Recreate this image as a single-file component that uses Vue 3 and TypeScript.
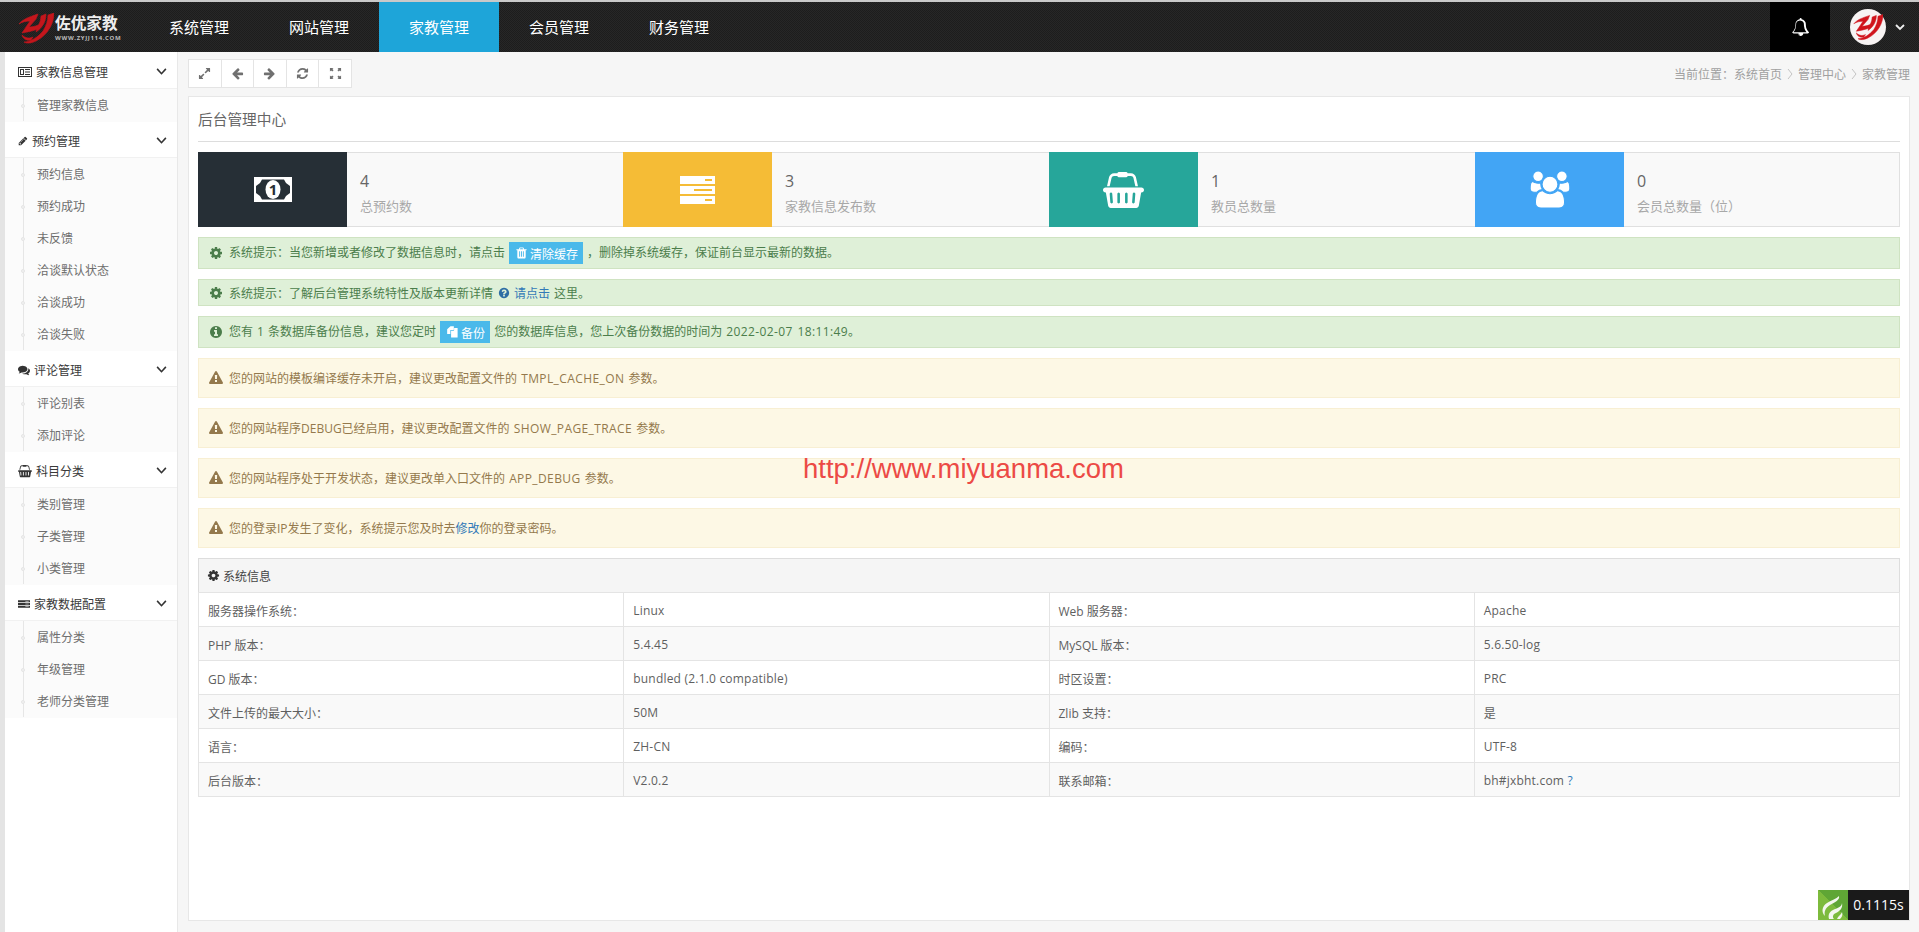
<script setup lang="ts">
const nav = ['系统管理', '网站管理', '家教管理', '会员管理', '财务管理']

const P = {
  gear: 'M1152 896q0-106-75-181t-181-75-181 75-75 181 75 181 181 75 181-75 75-181zm512-109v222q0 12-8 23t-20 13l-185 28q-19 54-39 91 35 50 107 138 10 12 10 25t-9 23q-27 37-99 108t-94 71q-12 0-26-9l-138-108q-44 23-91 38-16 136-29 186-7 28-36 28h-222q-14 0-24.500-8.500t-11.500-21.500l-28-184q-49-16-90-37l-141 107q-10 9-25 9-14 0-25-11-126-114-165-168-7-10-7-23 0-12 8-23 15-21 51-66.500t54-70.500q-27-50-41-99l-183-27q-13-2-21-12.500t-8-23.500v-222q0-12 8-23t19-13l186-28q14-46 39-92-40-57-107-138-10-12-10-24 0-10 9-23 26-36 98.500-107.500t94.500-71.500q13 0 26 10l138 107q44-23 91-38 16-136 29-186 7-28 36-28h222q14 0 24.500 8.500t11.500 21.500l28 184q49 16 90 37l142-107q9-9 24-9 13 0 25 10 129 119 165 170 7 8 7 22 0 12-8 23-15 21-51 66.500t-54 70.500q26 50 41 98l183 28q13 2 21 12.500t8 23.500z',
  users: 'M593 896q-162 5-265 128h-134q-82 0-138-40.500t-56-118.500q0-353 124-353 6 0 43.500 21t97.500 42.500 119 21.500q67 0 133-23-5 37-5 66 0 139 81 256zm1071 637q0 120-73 189.500t-194 69.500h-874q-121 0-194-69.500t-73-189.500q0-53 3.500-103.500t14-109 26.500-108.500 43-97.500 62-81 85.500-53.500 111.500-20q10 0 43 21.500t73 48 107 48 135 21.500 135-21.500 107-48 73-48 43-21.500q61 0 111.500 20t85.500 53.500 62 81 43 97.500 26.500 108.500 14 109 3.500 103.500zm-1024-1277q0 106-75 181t-181 75-181-75-75-181 75-181 181-75 181 75 75 181zm704 384q0 159-112.500 271.500t-271.500 112.500-271.500-112.500-112.500-271.500 112.500-271.500 271.500-112.500 271.500 112.500 112.500 271.500zm576 225q0 78-56 118.500t-138 40.500h-134q-103-123-265-128 81-117 81-256 0-29-5-66 66 23 133 23 59 0 119-21.500t97.500-42.500 43.500-21q124 0 124 353zm-128-609q0 106-75 181t-181 75-181-75-75-181 75-181 181-75 181 75 75 181z',
  bell: 'M912 1696q0-16-16-16-59 0-101.500-42.500t-42.500-101.500q0-16-16-16t-16 16q0 73 51.500 124.500t124.500 51.500q16 0 16-16zm-666-288h1300q-266-300-266-832 0-51-24-105t-69-103-121.500-80.500-169.500-31.500-169.500 31.500-121.500 80.500-69 103-24 105q0 532-266 832zm1546 0q0 52-38 90t-90 38h-448q0 106-75 181t-181 75-181-75-75-181h-448q-52 0-90-38t-38-90q50-42 91-88t85-119.500 74.500-158.500 50-206 19.500-260q0-152 117-282.500t307-158.500q-8-19-8-39 0-40 28-68t68-28 68 28 28 68q0 20-8 39 190 28 307 158.500t117 282.500q0 139 19.500 260t50 206 74.500 158.500 85 119.500 91 88z',
  pencil: 'M491 1536l91-91-235-235-91 91v107h128v128h107zm523-928q0-22-22-22-10 0-17 7l-542 542q-7 7-7 17 0 22 22 22 10 0 17-7l542-542q7-7 7-17zm-54-192l416 416-832 832h-416v-416zm683 96q0 53-37 90l-166 166-416-416 166-165q36-38 90-38 53 0 91 38l235 234q37 39 37 91z',
  comments: 'M1408 768q0 139-94 257t-256.500 186.500-353.500 68.500q-86 0-176-16-124 88-278 128-36 9-86 16h-3q-11 0-20.500-8t-11.500-21q-1-3-1-6.500t.5-6.500 2-6l2.500-5 3.500-5.500 4-5 4.500-5 4-4.500q5-6 23-25t26-29.500 22.500-29 25-38.500 20.500-44q-124-72-195-177t-71-224q0-139 94-257t256.500-186.500 353.500-68.500 353.500 68.500 256.500 186.500 94 257zm384 256q0 120-71 224.500t-195 176.500q10 24 20.500 44t25 38.500 22.500 29 26 29.500 23 25q1 1 4 4.500t4.500 5 4 5 3.500 5.500l2.500 5 2 6 .5 6.500-1 6.500q-3 14-13 22t-22 7q-50-7-86-16-154-40-278-128-90 16-176 16-271 0-472-132 58 4 88 4 161 0 309-45t264-129q125-92 192-212t67-254q0-77-23-152 129 71 204 178t75 230z',
  basket: 'M1920 768q53 0 90.500 37.500t37.500 90.500-37.500 90.500-90.500 37.500h-15l-115 662q-8 46-44 76t-82 30h-1280q-46 0-82-30t-44-76l-115-662h-15q-53 0-90.500-37.500t-37.500-90.500 37.500-90.500 90.500-37.500h1792zm-1485 800q26-2 43.500-22.500t15.500-46.500l-32-416q-2-26-22.500-43.500t-46.500-15.500-43.500 22.500-15.500 46.500l32 416q2 25 20.500 42t43.500 17h5zm411-64v-416q0-26-19-45t-45-19-45 19-19 45v416q0 26 19 45t45 19 45-19 19-45zm384 0v-416q0-26-19-45t-45-19-45 19-19 45v416q0 26 19 45t45 19 45-19 19-45zm352 5l32-416q2-26-15.500-46.500t-43.500-22.500-46.500 15.500-22.500 43.500l-32 416q-2 26 15.500 46.500t43.500 22.500h5q25 0 43.500-17t20.500-42zm-1156-1217l-93 412h-132l101-441q19-88 89-143.500t160-55.500h167q0-26 19-45t45-19h384q26 0 45 19t19 45h167q90 0 160 55.500t89 143.500l101 441h-132l-93-412q-11-44-45.500-72t-79.500-28h-167q0 26-19 45t-45 19h-384q-26 0-45-19t-19-45h-167q-45 0-79.500 28t-45.500 72z',
  trash: 'M704 1376v-704q0-14-9-23t-23-9h-64q-14 0-23 9t-9 23v704q0 14 9 23t23 9h64q14 0 23-9t9-23zm256 0v-704q0-14-9-23t-23-9h-64q-14 0-23 9t-9 23v704q0 14 9 23t23 9h64q14 0 23-9t9-23zm256 0v-704q0-14-9-23t-23-9h-64q-14 0-23 9t-9 23v704q0 14 9 23t23 9h64q14 0 23-9t9-23zm-544-992h448l-48-117q-7-9-17-11h-317q-10 2-17 11zm928 32v64q0 14-9 23t-23 9h-96v948q0 83-47 143.500t-113 60.500h-832q-66 0-113-58.500t-47-141.500v-952h-96q-14 0-23-9t-9-23v-64q0-14 9-23t23-9h309l70-167q15-37 54-63t79-26h320q40 0 79 26t54 63l70 167h309q14 0 23 9t9 23z',
  warning: 'M1024 1375v-190q0-14-9.500-23.500t-22.500-9.500h-192q-13 0-22.500 9.500t-9.500 23.500v190q0 14 9.500 23.500t22.500 9.500h192q13 0 22.500-9.500t9.500-23.500zm-2-374l18-459q0-12-10-19-13-11-24-11h-220q-11 0-24 11-10 7-10 21l17 457q0 10 10 16.500t24 6.500h185q14 0 23.500-6.500t10.500-16.500zm-14-934l768 1408q35 63-2 126-17 29-46.500 46t-63.500 17h-1536q-34 0-63.500-17t-46.500-46q-37-63-2-126l768-1408q17-31 47-49t65-18 65 18 47 49z',
  info: 'M1152 1376v-160q0-14-9-23t-23-9h-96v-512q0-14-9-23t-23-9h-320q-14 0-23 9t-9 23v160q0 14 9 23t23 9h96v320h-96q-14 0-23 9t-9 23v160q0 14 9 23t23 9h448q14 0 23-9t9-23zm-128-896v-160q0-14-9-23t-23-9h-192q-14 0-23 9t-9 23v160q0 14 9 23t23 9h192q14 0 23-9t9-23zm640 416q0 209-103 385.500t-279.500 279.500-385.500 103-385.500-103-279.500-279.500-103-385.500 103-385.500 279.500-279.500 385.500-103 385.500 103 279.500 279.500 103 385.500z',
  question: 'M1024 1376v-192q0-14-9-23t-23-9h-192q-14 0-23 9t-9 23v192q0 14 9 23t23 9h192q14 0 23-9t9-23zm256-672q0-88-55.500-163t-138.500-116-170-41q-243 0-371 213-15 24 8 42l132 100q7 6 19 6 16 0 25-12 53-68 86-92 34-24 86-24 48 0 85.500 26t37.500 59q0 38-20 61t-68 45q-63 28-115.500 86.500t-52.500 125.500v36q0 14 9 23t23 9h192q14 0 23-9t9-23q0-19 21.500-49.500t54.500-49.500q32-18 49-28.500t46-35 44.500-48 28-60.500 12.500-81zm384 192q0 209-103 385.500t-279.500 279.500-385.500 103-385.500-103-279.500-279.500-103-385.500 103-385.500 279.500-279.500 385.500-103 385.500 103 279.500 279.500 103 385.500z',
  left: 'M1664 896v128q0 53-32.500 90.500t-84.500 37.500h-704l293 294q38 36 38 90t-38 90l-75 76q-37 37-90 37-52 0-91-37l-651-652q-37-37-37-90 0-52 37-91l651-650q38-38 91-38 52 0 90 38l75 74q38 38 38 91t-38 91l-293 293h704q52 0 84.500 37.500t32.500 90.500z',
  right: 'M1600 960q0 54-37 91l-651 651q-39 37-91 37-51 0-90-37l-75-75q-38-38-38-91t38-91l293-293h-704q-52 0-84.500-37.500t-32.500-90.500v-128q0-53 32.500-90.500t84.500-37.500h704l-293-294q-38-36-38-90t38-90l75-75q38-38 90-38 53 0 91 38l651 651q37 35 37 90z',
  refresh: 'M1639 1056q0 5-1 7-64 268-268 434.500t-478 166.500q-146 0-282.500-55t-243.500-157l-129 129q-19 19-45 19t-45-19-19-45v-448q0-26 19-45t45-19h448q26 0 45 19t19 45-19 45l-137 137q71 66 161 102t187 36q134 0 250-65t186-179q11-17 53-117 8-23 30-23h192q13 0 22.500 9.500t9.500 22.500zm25-800v448q0 26-19 45t-45 19h-448q-26 0-45-19t-19-45 19-45l138-138q-148-137-349-137-134 0-250 65t-186 179q-11 17-53 117-8 23-30 23h-199q-13 0-22.500-9.500t-9.500-22.500v-7q65-268 270-434.500t480-166.500q146 0 284 55.500t245 156.500l130-129q19-19 45-19t45 19 19 45z',
  expand: 'M883 1056q0 13-10 23l-332 332 144 144q19 19 19 45t-19 45-45 19h-448q-26 0-45-19t-19-45v-448q0-26 19-45t45-19 45 19l144 144 332-332q10-10 23-10t23 10l114 114q10 10 10 23zm781-864v448q0 26-19 45t-45 19-45-19l-144-144-332 332q-10 10-23 10t-23-10l-114-114q-10-10-10-23t10-23l332-332-144-144q-19-19-19-45t19-45 45-19h448q26 0 45 19t19 45z',
  full: 'M128 128h500L470 286l160 160-184 184-160-160-158 158zM1664 128v500l-158-158-160 160-184-184 160-160L1164 128zM128 1664v-500l158 158 160-160 184 184-160 160 158 158zM1664 1664h-500l158-158-160-160 184-184 160 160 158-158z',
  news: 'M0 256h1792v1280H0zM128 384v1024h1536V384zM256 512h512v768H256zM384 640v512h256V640zM896 512h640v128H896zM896 832h640v128H896zM896 1152h640v128H896z',
  serverDark: 'M0 320h1792v320H0zM0 736h1792v320H0zM0 1152h1792v320H0zM1100 440v80h500v-80zM1100 856v80h500v-80zM1100 1272v80h500v-80z',
  files: 'M160 520 620 120h460v420q0 70-70 70H600v560H160zM700 720h330q90 0 90-90V330h480v1340H700zM620 220v300H280z',
  logo: [
    'M1 11C5 6 11 4 20 1L18 6 11 14C15 14 19 13 22 11L20 16C15 18 9 19 4 20L12 8C8 8 4 9 1 11z',
    'M23 3 28 1C28 9 24 15 18 19 19 15 23 9 23 3z',
    'M30 2 36 0C36 10 30 22 18 28 14 30 9 31 6 29 13 29 20 24 25 18 28 13 30 8 30 2z',
    'M4 22C7 25 11 26 15 24L13 27C9 28 5 26 4 22z'
  ].join(''),
  flame: [
    'M21 6C22 10 17 12 12 15 7 18 6 22 7 26 3 22 4 16 9 13 14 10 18 9 21 6z',
    'M24 13C24 17 19 18 15 20 11 22 10 25 11 29H16C14 27 15 24 18 23 22 21 25 18 24 13z',
    'M24 22C23 25 20 26 19 29H22C24 27 25 25 24 22z'
  ].join('')
}

const tools = [P.expand, P.left, P.right, P.refresh, P.full]

const menu = [
  { title: '家教信息管理', icon: P.news, vb: '0 0 1792 1792', cls: 'ic-14', children: ['管理家教信息'] },
  { title: '预约管理', icon: P.pencil, vb: '0 0 1792 1792', cls: 'ic-10', children: ['预约信息', '预约成功', '未反馈', '洽谈默认状态', '洽谈成功', '洽谈失败'] },
  { title: '评论管理', icon: P.comments, vb: '0 0 1792 1792', cls: 'ic-12', children: ['评论别表', '添加评论'] },
  { title: '科目分类', icon: P.basket, vb: '0 0 2048 1792', cls: 'ic-14', children: ['类别管理', '子类管理', '小类管理'] },
  { title: '家教数据配置', icon: P.serverDark, vb: '0 0 1792 1792', cls: 'ic-12', children: ['属性分类', '年级管理', '老师分类管理'] }
]

const stats = [
  { value: '4', label: '总预约数', cls: 'dark' },
  { value: '3', label: '家教信息发布数', cls: 'yellow' },
  { value: '1', label: '教员总数量', cls: 'teal' },
  { value: '0', label: '会员总数量（位）', cls: 'blue' }
]

const warnings = [
  { a: '您的网站的模板编译缓存未开启，建议更改配置文件的 ', en: 'TMPL_CACHE_ON', b: ' 参数。' },
  { a: '您的网站程序DEBUG已经启用，建议更改配置文件的 ', en: 'SHOW_PAGE_TRACE', b: ' 参数。' },
  { a: '您的网站程序处于开发状态，建议更改单入口文件的 ', en: 'APP_DEBUG', b: ' 参数。' }
]

const rows = [
  ['服务器操作系统：', 'Linux', 'Web 服务器：', 'Apache'],
  ['PHP 版本：', '5.4.45', 'MySQL 版本：', '5.6.50-log'],
  ['GD 版本：', 'bundled (2.1.0 compatible)', '时区设置：', 'PRC'],
  ['文件上传的最大大小：', '50M', 'Zlib 支持：', '是'],
  ['语言：', 'ZH-CN', '编码：', 'UTF-8']
]

const isLatin = (s: string): boolean => /^[\x20-\x7e]+$/.test(s)
</script>

<template>
  <div class="page">
    <header class="topbar">
      <div class="brand">
        <svg class="brand-mark" viewBox="0 0 36 31"><path :d="P.logo" /></svg>
        <div class="brand-text">
          <div class="brand-name">佐优家教</div>
          <div class="brand-url">WWW.ZYJJ114.COM</div>
        </div>
      </div>
      <nav class="nav">
        <a v-for="n in nav" :key="n" class="nav-item" :class="{ active: n === '家教管理' }">{{ n }}</a>
      </nav>
      <div class="bell"><svg viewBox="0 0 1792 1792"><path :d="P.bell" /></svg></div>
      <div class="user">
        <div class="avatar"><svg viewBox="0 0 36 31"><path :d="P.logo" /></svg></div>
        <svg class="user-caret" viewBox="0 0 10 7"><polyline points="1,1 5,5 9,1" /></svg>
      </div>
    </header>

    <div class="body">
      <aside class="side">
        <section v-for="m in menu" :key="m.title" class="group">
          <div class="group-head">
            <svg class="group-icon" :class="m.cls" :viewBox="m.vb"><path :d="m.icon" fill-rule="evenodd" /></svg>
            <span class="group-title">{{ m.title }}</span>
            <svg class="group-caret" viewBox="0 0 12 8"><polyline points="1,1 6,6.500 11,1" /></svg>
          </div>
          <div class="group-body">
            <ul class="tree">
              <li v-for="c in m.children" :key="c">{{ c }}</li>
            </ul>
          </div>
        </section>
      </aside>

      <main class="main">
        <div class="bar">
          <div class="tools">
            <button v-for="(d, i) in tools" :key="i" class="tool" type="button">
              <svg viewBox="0 0 1792 1792"><path :d="d" /></svg>
            </button>
          </div>
          <div class="crumbs">
            <span>当前位置：系统首页</span>
            <svg viewBox="0 0 6 12"><polyline points="1,1 5,6 1,11" /></svg>
            <span>管理中心</span>
            <svg viewBox="0 0 6 12"><polyline points="1,1 5,6 1,11" /></svg>
            <span>家教管理</span>
          </div>
        </div>

        <div class="panel">
          <h2 class="panel-title">后台管理中心</h2>

          <div class="stats">
            <div v-for="s in stats" :key="s.cls" class="stat">
              <div class="stat-icon" :class="s.cls">
                <svg v-if="s.cls === 'dark'" class="i-money" viewBox="0 0 38 25">
                  <rect width="38" height="25" fill="#fff" />
                  <path d="M8 2.500h22l2 3.500 4 3v7l-4 3-2 3.500H8l-2-3.500-4-3V9l4-3z" fill="#262f36" />
                  <ellipse cx="19" cy="12.500" rx="7.500" ry="9.500" fill="#fff" />
                  <text x="19" y="18" text-anchor="middle" class="money-one">1</text>
                </svg>
                <svg v-else-if="s.cls === 'yellow'" class="i-server" viewBox="0 0 35 28">
                  <rect width="35" height="8" fill="#fff" />
                  <rect y="10" width="35" height="8" fill="#fff" />
                  <rect y="20" width="35" height="8" fill="#fff" />
                  <rect x="25" y="3" width="7" height="2" fill="#f5bc36" />
                  <rect x="14" y="13" width="18" height="2" fill="#f5bc36" />
                  <rect x="25" y="23" width="7" height="2" fill="#f5bc36" />
                </svg>
                <svg v-else-if="s.cls === 'teal'" class="i-basket" viewBox="0 0 2048 1792"><path :d="P.basket" /></svg>
                <svg v-else class="i-users" viewBox="0 0 1920 1792"><path :d="P.users" /></svg>
              </div>
              <div class="stat-text">
                <div class="stat-value">{{ s.value }}</div>
                <div class="stat-label">{{ s.label }}</div>
              </div>
            </div>
          </div>

          <div class="alert ok h32">
            <svg class="a-icon" viewBox="0 0 1792 1792"><path :d="P.gear" /></svg>
            <span>系统提示：当您新增或者修改了数据信息时，请点击</span>
            <a class="chip"><svg viewBox="0 0 1792 1792"><path :d="P.trash" /></svg><b>清除缓存</b></a>
            <span>，删除掉系统缓存，保证前台显示最新的数据。</span>
          </div>
          <div class="alert ok h27">
            <svg class="a-icon" viewBox="0 0 1792 1792"><path :d="P.gear" /></svg>
            <span>系统提示：了解后台管理系统特性及版本更新详情</span>
            <svg class="q-icon" viewBox="0 0 1792 1792"><path :d="P.question" /></svg>
            <a class="link">请点击</a>
            <span class="after-link">这里。</span>
          </div>
          <div class="alert ok h32">
            <svg class="a-icon" viewBox="0 0 1792 1792"><path :d="P.info" /></svg>
            <span>您有 1 条数据库备份信息，建议您定时</span>
            <a class="chip"><svg viewBox="0 0 1792 1792"><path :d="P.files" /></svg><b>备份</b></a>
            <span>您的数据库信息，您上次备份数据的时间为 <span class="en">2022-02-07 18:11:49</span>。</span>
          </div>

          <div v-for="w in warnings" :key="w.en" class="alert warn h40">
            <svg class="a-icon" viewBox="0 0 1792 1792"><path :d="P.warning" /></svg>
            <span>{{ w.a }}<span class="en">{{ w.en }}</span>{{ w.b }}</span>
          </div>
          <div class="alert warn h40">
            <svg class="a-icon" viewBox="0 0 1792 1792"><path :d="P.warning" /></svg>
            <span>您的登录IP发生了变化，系统提示您及时去<a class="link">修改</a>你的登录密码。</span>
          </div>

          <div class="info-head">
            <svg viewBox="0 0 1792 1792"><path :d="P.gear" /></svg>
            <span>系统信息</span>
          </div>
          <table class="info">
            <tbody>
              <tr v-for="r in rows" :key="r[0]">
                <td v-for="c in r" :key="c" :class="{ latin: isLatin(c) }">{{ c }}</td>
              </tr>
              <tr>
                <td>后台版本：</td>
                <td class="latin">V2.0.2</td>
                <td>联系邮箱：</td>
                <td class="latin">bh#jxbht.com <a class="link">?</a></td>
              </tr>
            </tbody>
          </table>

          <div class="watermark">http://www.miyuanma.com</div>
        </div>

        <div class="trace">
          <div class="trace-logo">
            <svg viewBox="0 0 30 30"><path :d="P.flame" /></svg>
          </div>
          <div class="trace-time">0.1115s</div>
        </div>
      </main>
    </div>
  </div>
</template>

<style scoped>
.page {
  height: 932px;
  display: flex;
  flex-direction: column;
  overflow: hidden;
  font-family: "Open Sans", "Noto Sans CJK SC", sans-serif;
  font-size: 12px;
  color: #555;
  background: #f6f6f6;
}

/* top bar */
.topbar {
  height: 52px;
  flex: none;
  box-sizing: border-box;
  display: flex;
  border-top: 2px solid #c9c9c9;
  background: repeating-conic-gradient(#272727 0 25%, #1d1d1d 0 50%) 0 0 / 2px 2px;
}
.brand {
  width: 139px;
  flex: none;
  box-sizing: border-box;
  padding: 11px 0 0 18px;
  display: flex;
  align-items: flex-start;
}
.brand-mark {
  width: 36px;
  height: 31px;
  flex: none;
  fill: #c4161c;
  stroke: #c4161c;
  stroke-width: 0.6;
}
.brand-text {
  margin-left: 1px;
  color: #eee;
}
.brand-name {
  font-size: 15.700px;
  line-height: 20px;
  font-weight: 700;
  white-space: nowrap;
}
.brand-url {
  font-size: 6px;
  line-height: 8px;
  margin-top: 1px;
  letter-spacing: 0.65px;
  font-weight: 700;
  color: #bbb;
  white-space: nowrap;
}
.nav {
  display: flex;
}
.nav-item {
  width: 120px;
  text-align: center;
  line-height: 50px;
  font-size: 15px;
  color: #fff;
}
.nav-item.active {
  background: #1ea5d9;
}
.bell {
  margin-left: auto;
  width: 60px;
  background: #000;
  display: flex;
  align-items: center;
  justify-content: center;
}
.bell svg {
  width: 18px;
  height: 18px;
  fill: #fff;
}
.user {
  width: 89px;
  box-sizing: border-box;
  padding-left: 20px;
  display: flex;
  align-items: center;
}
.avatar {
  width: 36px;
  height: 36px;
  border-radius: 50%;
  background: #f7f3f3;
  display: flex;
  align-items: center;
  justify-content: center;
}
.avatar svg {
  width: 30px;
  height: 27px;
  fill: #d0141c;
  stroke: #d0141c;
  stroke-width: 0.6;
}
.user-caret {
  width: 10px;
  height: 7px;
  margin-left: 9px;
  fill: none;
  stroke: #eee;
  stroke-width: 1.800;
}

/* body */
.body {
  flex: 1;
  min-height: 0;
  display: flex;
}
.side {
  width: 178px;
  flex: none;
  box-sizing: border-box;
  border-left: 5px solid #e4e4e4;
  border-right: 1px solid #e8e8e8;
  background: #fff;
  padding-top: 1px;
}
.group-head {
  height: 36px;
  box-sizing: border-box;
  padding: 2px 0 0 13px;
  display: flex;
  align-items: center;
  gap: 4px;
  background: #fff;
  border-bottom: 1px solid #f1f1f1;
  color: #3a3a3a;
}
.group-icon {
  height: 14px;
  flex: none;
  fill: #333;
}
.ic-14 { width: 14px; }
.ic-12 { width: 12px; }
.ic-10 { width: 10px; }
.group-title {
  flex: 1;
}
.group-caret {
  width: 11px;
  height: 7px;
  margin-right: 10px;
  fill: none;
  stroke: #333;
  stroke-width: 1.800;
}
.group-body {
  background: #fbfbfb;
  padding: 0 0 1px 18px;
}
.tree {
  list-style: none;
  margin: 0;
  padding: 0;
  border-left: 1px solid #e6e6e6;
}
.tree li {
  height: 32px;
  line-height: 34px;
  padding-left: 13px;
  color: #6e6e6e;
  position: relative;
}
.tree li::before {
  content: "";
  position: absolute;
  left: -3px;
  top: 15px;
  width: 4px;
  height: 4px;
  border-radius: 50%;
  background: #f1f1f1;
  border: 1px solid #e6e6e6;
  box-sizing: border-box;
}

/* main */
.main {
  flex: 1;
  min-width: 0;
  box-sizing: border-box;
  padding: 7px 9px 11px 10px;
  display: flex;
  flex-direction: column;
  position: relative;
}
.bar {
  height: 29px;
  margin-bottom: 8px;
  flex: none;
  display: flex;
  align-items: center;
  justify-content: space-between;
}
.tools {
  width: 164px;
  height: 29px;
  box-sizing: border-box;
  display: flex;
  background: #fff;
  border: 1px solid #e4e4e4;
}
.tool {
  flex: 1;
  padding: 0;
  border: 0;
  border-right: 1px solid #e4e4e4;
  background: transparent;
  display: flex;
  align-items: center;
  justify-content: center;
}
.tool:last-child {
  border-right: 0;
}
.tool svg {
  width: 13px;
  height: 13px;
  fill: #707070;
}
.crumbs {
  display: flex;
  align-items: center;
  color: #a0a0a0;
}
.crumbs svg {
  width: 6px;
  height: 12px;
  margin: 0 5px;
  fill: none;
  stroke: #c4c4c4;
}

.panel {
  flex: 1;
  min-height: 0;
  box-sizing: border-box;
  padding: 0 9px;
  background: #fff;
  border: 1px solid #e7e7e7;
  position: relative;
}
.panel-title {
  height: 45px;
  box-sizing: border-box;
  margin: 0 0 10px;
  line-height: 44px;
  font-size: 14.700px;
  font-weight: 400;
  color: #666;
  border-bottom: 1px solid #ddd;
}

.stats {
  display: grid;
  grid-template-columns: 425px 426px 426px 425px;
  height: 75px;
  margin-bottom: 10px;
  background: #f9f9f9;
  box-shadow: inset 0 0 0 1px #e0e0e0;
}
.stat {
  display: flex;
}
.stat-icon {
  width: 149px;
  flex: none;
  display: flex;
  align-items: center;
  justify-content: center;
}
.stat-icon.dark { background: #262f36; }
.stat-icon.yellow { background: #f5bc36; }
.stat-icon.teal { background: #26a69a; }
.stat-icon.blue { background: #42a5f5; }
.i-money { width: 38px; height: 25px; }
.money-one {
  font-size: 15px;
  font-weight: 700;
  fill: #262f36;
}
.i-server { width: 35px; height: 28px; }
.i-basket { width: 41px; height: 36px; fill: #fff; }
.i-users {
  width: 40px;
  height: 37px;
  fill: #fff;
  stroke: #42a5f5;
  stroke-width: 50;
}
.stat-text {
  padding: 19px 0 0 13px;
}
.stat-value {
  font-size: 16px;
  line-height: 20px;
  color: #666;
}
.stat-label {
  margin-top: 6px;
  font-size: 13px;
  line-height: 18px;
  color: #a8a8a8;
}

.alert {
  box-sizing: border-box;
  margin-bottom: 10px;
  padding-left: 10px;
  display: flex;
  align-items: center;
  white-space: pre;
  word-spacing: 1px;
  border: 1px solid;
}
.h27 { height: 27px; }
.h32 { height: 32px; }
.h40 { height: 40px; }
.h32 > span {
  margin-top: -2px;
}
.ok {
  background: #dff0d8;
  border-color: #cfe3c2;
  color: #4b7d4b;
}
.warn {
  background: #fdf8e5;
  border-color: #f8efd3;
  color: #94794c;
}
.a-icon {
  width: 14px;
  height: 14px;
  margin-right: 6px;
  flex: none;
  fill: currentColor;
}
.q-icon {
  width: 12px;
  height: 12px;
  margin: 0 4px 0 5px;
  fill: #2e6da4;
}
.link {
  color: #337ab7;
}
.after-link {
  margin-left: 4px;
}
.en {
  letter-spacing: 0.4px;
}
.chip {
  height: 22px;
  box-sizing: border-box;
  margin: 0 4px;
  padding: 0 5px 0 6px;
  display: inline-flex;
  align-items: center;
  gap: 2px;
  background: #4ab9ea;
  color: #fff;
}
.chip svg {
  width: 13px;
  height: 14px;
  fill: #fff;
}
.chip b {
  font-weight: 400;
  padding-top: 2px;
}

.info-head {
  height: 34px;
  box-sizing: border-box;
  padding-left: 8px;
  display: flex;
  align-items: center;
  gap: 3px;
  background: #f5f5f5;
  border: 1px solid #ddd;
  border-bottom: 0;
  color: #444;
}
.info-head svg {
  width: 13px;
  height: 13px;
  fill: #333;
}
.info {
  width: 100%;
  table-layout: fixed;
  border-collapse: collapse;
}
.info td {
  height: 34px;
  box-sizing: border-box;
  padding: 2px 9px 0;
  border: 1px solid #e4e4e4;
  color: #5f5f5f;
}
.info td.latin {
  letter-spacing: 0.2px;
}
.info tr:nth-child(even) td {
  background: #f9f9f9;
}

.watermark {
  position: absolute;
  left: 614px;
  top: 355px;
  font-family: "Liberation Sans", Arial, sans-serif;
  font-size: 27.500px;
  line-height: 34px;
  color: #ec4a45;
  white-space: nowrap;
}

.trace {
  position: absolute;
  right: 10px;
  bottom: 12px;
  height: 30px;
  display: flex;
}
.trace-logo {
  width: 30px;
  background: linear-gradient(45deg, #7dbb3c 50%, #5fa635 50%);
}
.trace-logo svg {
  display: block;
  width: 30px;
  height: 30px;
  fill: #f4f7ee;
}
.trace-time {
  width: 61px;
  text-align: center;
  line-height: 30px;
  font-size: 14px;
  color: #fff;
  background: #1a1a1a;
}
</style>

<style>
html, body {
  margin: 0;
  overflow: hidden;
}
</style>
